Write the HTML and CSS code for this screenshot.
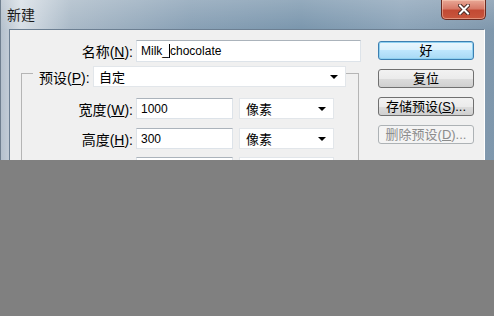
FILE: index.html
```
<!DOCTYPE html>
<html lang="zh-CN">
<head>
  <meta charset="UTF-8">
  <title>新建</title>
  <link rel="stylesheet" href="styles.css">
</head>
<body>
  <div class="window">
    <div class="titlebar">
      <span class="title">新建</span>
      <div class="close">
        <svg width="12" height="11" viewBox="0 0 12 11">
          <path d="M2 1.5 L10 9.5 M10 1.5 L2 9.5" stroke="#4a2a24" stroke-width="4" stroke-linecap="square"/>
          <path d="M2 1.5 L10 9.5 M10 1.5 L2 9.5" stroke="#ffffff" stroke-width="2" stroke-linecap="square"/>
        </svg>
      </div>
    </div>
    <div class="client">
      <div class="form">
        <div class="row name-row">
          <label class="lbl">名称(<u>N</u>):</label>
          <div class="field name-field">Milk_<span class="caret"></span>chocolate</div>
        </div>
        <div class="group">
          <div class="row preset-row">
            <label class="lbl preset-lbl">预设(<u>P</u>):</label>
            <div class="combo preset-combo"><span>自定</span><i class="arrow"></i></div>
          </div>
          <div class="row size-row">
            <label class="lbl">宽度(<u>W</u>):</label>
            <div class="field num">1000</div>
            <div class="combo unit"><span>像素</span><i class="arrow"></i></div>
          </div>
          <div class="row size-row row-h">
            <label class="lbl">高度(<u>H</u>):</label>
            <div class="field num">300</div>
            <div class="combo unit"><span>像素</span><i class="arrow"></i></div>
          </div>
          <div class="row size-row row-next">
            <label class="lbl"></label>
            <div class="field num"></div>
            <div class="combo unit"></div>
          </div>
        </div>
      </div>
      <div class="buttons">
        <button class="btn default">好</button>
        <button class="btn">复位</button>
        <button class="btn">存储预设(<u>S</u>)...</button>
        <button class="btn disabled">删除预设(<u>D</u>)...</button>
      </div>
    </div>
  </div>
</body>
</html>
```

FILE: styles.css
```
* {
  box-sizing: border-box;
}
body {
  margin: 0;
  background-color: #808080;
  font-family: "Liberation Sans", "Noto Sans CJK SC", sans-serif;
  font-size: 12px;
  color: #000;
}
.window {
  height: 160px;
  overflow: hidden;
  padding: 0 9px 0 8px;
  border-left: 1px solid #6f7f8f;
  background: linear-gradient(180deg, rgba(255, 255, 255, 0.2), rgba(255, 255, 255, 0) 30px),
    linear-gradient(90deg, #b4c0cc 0, #d8dfe6 20px, #a9b9c7 70px, #88a0b5 190px, #7a96ad 300px, #8ca4b9 400px, #7f97ac 494px);
}
.titlebar {
  height: 29px;
  display: flex;
  justify-content: space-between;
  align-items: flex-start;
  margin-left: -2px;
  margin-right: -1px;
}
.title {
  font-family: "Noto Sans CJK SC", sans-serif;
  font-size: 14px;
  line-height: 16px;
  padding-top: 6px;
  color: #1a1a1a;
}
.close {
  width: 45px;
  height: 20px;
  display: flex;
  align-items: center;
  justify-content: center;
  border: 1px solid #6b2a20;
  border-top: none;
  border-radius: 0 0 5px 5px;
  background: linear-gradient(180deg, #e9a896 0, #d77a68 45%, #c24a34 55%, #c8563d 100%);
  box-shadow: inset 0 0 0 1px rgba(255, 220, 200, 0.45);
}
.client {
  height: 131px;
  display: flex;
  background-color: #f0f0f0;
  border: 1px solid #6c7f92;
  border-right-color: #ffffff;
  border-bottom: none;
}
.form {
  width: 351px;
  padding-top: 10px;
}
.row {
  display: flex;
  align-items: center;
}
.lbl {
  font-size: 14px;
  text-align: right;
  padding-right: 3px;
  white-space: nowrap;
}
.name-row .lbl {
  width: 126px;
}
.field {
  height: 22px;
  background-color: #fff;
  border: 1px solid #dde3e9;
  border-top-color: #abb3bb;
  padding-left: 4px;
  display: flex;
  align-items: center;
  font-size: 12px;
}
.name-field {
  width: 225px;
}
.caret {
  display: inline-block;
  width: 1px;
  height: 14px;
  background-color: #000;
}
.group {
  margin: 11px 0 0 11px;
  width: 338px;
  height: 120px;
  border: 1px solid #b5b5b5;
  border-bottom: none;
}
.preset-row {
  margin-top: -8px;
  padding-left: 11px;
}
.preset-lbl {
  width: 60px;
  padding-left: 6px;
  padding-right: 4px;
  background-color: #f0f0f0;
}
.group .size-row .lbl {
  width: 114px;
}
.combo {
  height: 21px;
  background-color: #fff;
  border: 1px solid #e2e6ea;
  display: flex;
  align-items: center;
  justify-content: space-between;
  padding: 0 5px 0 5px;
  font-size: 13px;
  font-family: "Noto Sans CJK SC", sans-serif;
}
.preset-combo {
  width: 253px;
}
.size-row {
  margin-top: 11px;
}
.size-row .field {
  width: 97px;
  height: 21px;
}
.unit {
  width: 95px;
  margin-left: 6px;
  padding-left: 6px;
}
.row-h {
  margin-top: 9px;
}
.row-next {
  margin-top: 8px;
}
.arrow {
  width: 0;
  height: 0;
  border-left: 4px solid transparent;
  border-right: 4px solid transparent;
  border-top: 4px solid #000;
  margin-right: 2px;
}
.buttons {
  margin-left: 17px;
  padding-top: 11px;
  display: flex;
  flex-direction: column;
  gap: 9px;
}
.btn {
  width: 96px;
  height: 19px;
  padding: 0;
  border: 1px solid #707070;
  border-radius: 3px;
  background: linear-gradient(180deg, #f2f2f2 0, #ebebeb 50%, #dddddd 50%, #cfcfcf 100%);
  font-family: "Liberation Sans", "Noto Sans CJK SC", sans-serif;
  font-size: 13px;
  line-height: 17px;
  color: #000;
}
.default {
  border-color: #3c7fb1;
  background: linear-gradient(180deg, #eaf6fd 0, #d9f0fc 50%, #bee6fd 50%, #a7d9f5 100%);
  box-shadow: inset 0 0 0 1px #8fd0f0;
}
.disabled {
  border-color: #adb2b5;
  background: #f4f4f4;
  color: #8c8c8c;
}
```
